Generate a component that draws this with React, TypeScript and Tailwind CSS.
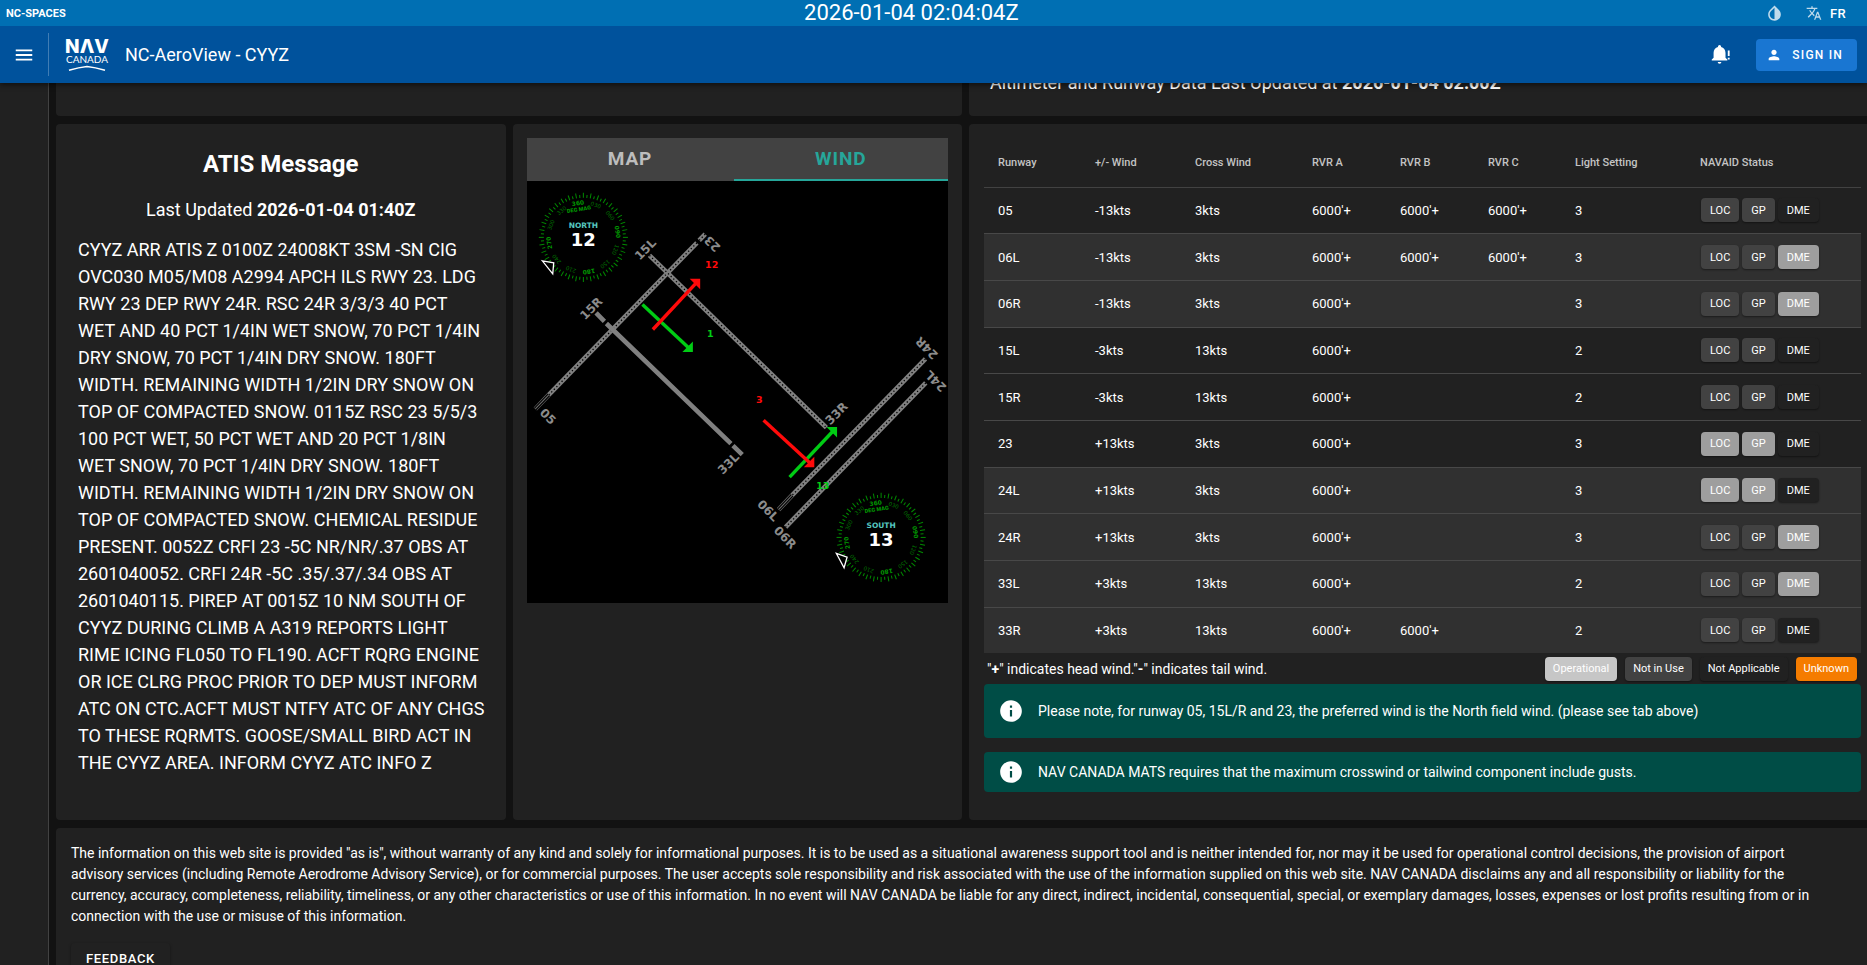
import React from "react";
import { MdInvertColors, MdTranslate, MdPerson, MdMenu, MdInfo } from "react-icons/md";

type Status = "off" | "on" | "na";

interface Runway {
  name: string;
  wind: string;
  cross: string;
  rvr: string[];
  light: string;
  shaded: boolean;
  loc: Status;
  gp: Status;
  dme: Status;
}

const V = "6000'+";

const runways: Runway[] = [
  { name: "05", wind: "-13kts", cross: "3kts", rvr: [V, V, V], light: "3", shaded: false, loc: "off", gp: "off", dme: "na" },
  { name: "06L", wind: "-13kts", cross: "3kts", rvr: [V, V, V], light: "3", shaded: true, loc: "off", gp: "off", dme: "on" },
  { name: "06R", wind: "-13kts", cross: "3kts", rvr: [V, "", ""], light: "3", shaded: true, loc: "off", gp: "off", dme: "on" },
  { name: "15L", wind: "-3kts", cross: "13kts", rvr: [V, "", ""], light: "2", shaded: false, loc: "off", gp: "off", dme: "na" },
  { name: "15R", wind: "-3kts", cross: "13kts", rvr: [V, "", ""], light: "2", shaded: false, loc: "off", gp: "off", dme: "na" },
  { name: "23", wind: "+13kts", cross: "3kts", rvr: [V, "", ""], light: "3", shaded: false, loc: "on", gp: "on", dme: "na" },
  { name: "24L", wind: "+13kts", cross: "3kts", rvr: [V, "", ""], light: "3", shaded: true, loc: "on", gp: "on", dme: "na" },
  { name: "24R", wind: "+13kts", cross: "3kts", rvr: [V, "", ""], light: "3", shaded: true, loc: "off", gp: "off", dme: "on" },
  { name: "33L", wind: "+3kts", cross: "13kts", rvr: [V, "", ""], light: "2", shaded: true, loc: "off", gp: "off", dme: "on" },
  { name: "33R", wind: "+3kts", cross: "13kts", rvr: [V, V, ""], light: "2", shaded: true, loc: "off", gp: "off", dme: "na" },
];

const columns = [
  { label: "Runway", width: "w-[97px]" },
  { label: "+/- Wind", width: "w-[100px]" },
  { label: "Cross Wind", width: "w-[117px]" },
  { label: "RVR A", width: "w-[88px]" },
  { label: "RVR B", width: "w-[88px]" },
  { label: "RVR C", width: "w-[87px]" },
  { label: "Light Setting", width: "w-[125px]" },
  { label: "NAVAID Status", width: "" },
];

const chipColor: Record<Status, string> = {
  off: "px-[9px] bg-[#424242]",
  on: "px-[9px] bg-[#9e9e9e]",
  na: "px-[9px] bg-[#212121]",
};

function Chip({ tone, children }: { tone: string; children: React.ReactNode }) {
  return (
    <span className={`inline-flex h-6 items-center rounded text-[11px] leading-none shadow-[0_1px_2px_rgba(0,0,0,0.45)] ${tone}`}>
      {children}
    </span>
  );
}

function Logo() {
  return (
    <svg viewBox="0 0 44 34" className="h-[34px] w-11 overflow-visible" role="img" aria-label="NAV CANADA" fill="#fff">
      <text x="22" y="15" textAnchor="middle" fontFamily="Inter, sans-serif" fontWeight="800" fontSize="19">NΛV</text>
      <text x="22" y="25" textAnchor="middle" fontFamily="Lato, sans-serif" fontWeight="400" fontSize="10">CANADA</text>
      <path d="M4 32.300 Q14 29.200 22 28.400 Q30 29.200 40 32.300" fill="none" stroke="#fff" strokeWidth="1.500" />
    </svg>
  );
}

function BellAlert() {
  return (
    <svg viewBox="0 0 24 24" className="size-[22px]" fill="#fff" aria-hidden="true">
      <path d="M20 17v1H3v-1l2-2V9.5C5 6.4 6.9 4 9.8 3.200V2.800a1.700 1.700 0 0 1 3.400 0v.4C16.100 4 18 6.400 18 9.500V15zM9.500 19.500h4a2 2 0 0 1-4 0zM20.500 7h2v6h-2zm0 8h2v2h-2z" />
    </svg>
  );
}

function Compass({ cx, cy, name, speed, pointer }: { cx: number; cy: number; name: string; speed: string; pointer: string }) {
  const ticks = Array.from({ length: 72 }, (_, i) => i * 5);
  const marks = ["360", "030", "060", "090", "120", "150", "180", "210", "240", "270", "300", "330"];
  return (
    <g transform={`translate(${cx} ${cy})`} fontFamily="DejaVu Sans, sans-serif" textAnchor="middle">
      {ticks.map((a) => (
        <line key={a} y1={a % 10 === 0 ? -44.5 : -42.5} y2={-39.5} stroke="#008a00" strokeWidth="1" transform={`rotate(${a})`} />
      ))}
      {marks.map((m, i) => (
        <text
          key={m}
          y="-32.500"
          fontSize={i % 3 === 0 ? 6 : 5.5}
          fill={i % 3 === 0 ? "#009600" : "#007000"}
          fontWeight={i % 3 === 0 ? 700 : 400}
          transform={`rotate(${i * 30 - 9})`}
        >
          {m}
        </text>
      ))}
      <text y="-26.500" fontSize="5.500" fontFamily="Roboto, sans-serif" fontWeight="900" fill="#009600" transform="rotate(-9)">DEG MAG</text>
      <text y="-9.500" fontSize="7.500" fontWeight="700" fill="#56c8c0">{name}</text>
      <text y="8.500" fontSize="18" fontWeight="700" fill="#fff">{speed}</text>
      <path d={pointer} fill="#000" stroke="#fff" strokeWidth="1.300" />
    </g>
  );
}

function DottedStrip({ d }: { d: string }) {
  return (
    <>
      <path d={d} stroke="#808080" strokeWidth="4.600" />
      <path d={d} stroke="#000" strokeWidth="1.300" strokeDasharray="1.300 2.400" />
    </>
  );
}

function Overrun({ d }: { d: string }) {
  return (
    <>
      <path d={d} stroke="#707070" strokeWidth="4.600" />
      <path d={d} stroke="#000" strokeWidth="3.400" />
      <path d={d} stroke="#707070" strokeWidth="1" />
    </>
  );
}

function WindArrow({ from, to, color }: { from: [number, number]; to: [number, number]; color: string }) {
  const dy = to[1] > from[1] ? -1 : 1;
  const [x, y] = to;
  return (
    <>
      <path d={`M${from[0]} ${from[1]}L${x - 3} ${y + 3 * dy}`} stroke={color} strokeWidth="3.400" />
      <path d={`M${x} ${y}h-10.500L${x} ${y + 10.5 * dy}z`} fill={color} />
    </>
  );
}

const runwayLabels: [string, number, number, number][] = [
  ["15L", 118, 68, -45],
  ["15R", 64, 127, -45],
  ["33L", 201, 282, -45],
  ["33R", 309, 232, -45],
  ["05", 21, 235, 45],
  ["06L", 241, 329, 45],
  ["06R", 258, 356, 45],
  ["23", 185, 63, 225],
  ["24R", 399, 167, 225],
  ["24L", 408, 200, 225],
];

function WindMap() {
  return (
    <svg viewBox="0 0 421 421" className="block w-full bg-black" role="img" aria-label="Wind diagram">
      <g fill="none">
        <DottedStrip d="M178 53 172 59.300" />
        <DottedStrip d="M169.700 61.700 21.700 213.700" />
        <Overrun d="M21.700 213.700 8.300 227.700" />
        <DottedStrip d="M122.300 74.300 299 246.300" />
        <path d="M69 131.700 77.300 140.300M79.300 142.300 203.700 262.300M205.700 264.300 215 273.300" stroke="#808080" strokeWidth="4.600" />
        <DottedStrip d="M398 177.700 264.700 314" />
        <Overrun d="M264.700 314 251.300 328.300" />
        <DottedStrip d="M398.300 201.700 258.300 345.700" />
      </g>
      <g fontFamily="DejaVu Sans, sans-serif" fontWeight="700" fontSize="12" fill="#8c8c8c" textAnchor="middle">
        {runwayLabels.map(([label, x, y, angle]) => (
          <text key={label} y="4.400" transform={`translate(${x} ${y}) rotate(${angle})`}>{label}</text>
        ))}
      </g>
      <WindArrow from={[115.3, 123.3]} to={[165.7, 170.7]} color="#00cc14" />
      <WindArrow from={[125.7, 148.3]} to={[173, 97.7]} color="#ff0a0a" />
      <WindArrow from={[262.3, 295.7]} to={[309.7, 245.7]} color="#00cc14" />
      <WindArrow from={[236.3, 239]} to={[287, 286]} color="#ff0a0a" />
      <g fontFamily="DejaVu Sans, sans-serif" fontWeight="700" fontSize="9.500" textAnchor="middle">
        <text x="184.500" y="87" fill="#ff0a0a">12</text>
        <text x="183" y="156" fill="#00cc14">1</text>
        <text x="232" y="222" fill="#ff0a0a">3</text>
        <text x="295.500" y="308" fill="#00cc14">13</text>
      </g>
      <Compass cx={56.3} cy={56.3} name="NORTH" speed="12" pointer="M-41 23.400 -29.600 25.400 -30.600 36.400z" />
      <Compass cx={353.7} cy={356} name="SOUTH" speed="13" pointer="M-44.700 16 -34 19.700 -37 30.300z" />
    </svg>
  );
}

function Notice({ className, children }: { className: string; children: React.ReactNode }) {
  return (
    <div className={`flex items-center gap-4 rounded bg-[#004d46] px-4 ${className}`} role="note">
      <MdInfo className="size-[26px] -mx-0.5 shrink-0" />
      <p className="text-sm">{children}</p>
    </div>
  );
}

export default function App() {
  return (
    <div className="flex h-screen flex-col overflow-hidden bg-[#121212] font-[Roboto,sans-serif] text-white">
      <div className="relative z-10 shrink-0 shadow-[0_2px_5px_rgba(0,0,0,0.5)]">
        <div className="flex h-[26px] items-center justify-between bg-[#006fb3] pl-[6px] pr-[21px]">
          <a href="#spaces" className="text-[11px] font-bold leading-none">NC-SPACES</a>
          <time className="text-[22px] leading-none">2026-01-04 02:04:04Z</time>
          <div className="flex items-center pl-2">
            <button type="button" aria-label="Toggle theme" className="mr-[22px]">
              <MdInvertColors className="size-[19px] text-white/75" />
            </button>
            <button type="button" className="flex items-center gap-2 text-[13px] font-medium leading-none tracking-wide">
              <MdTranslate className="size-4 text-white/75" />
              FR
            </button>
          </div>
        </div>
        <header className="flex h-[57px] items-center bg-[#00529c] pr-[10px]">
          <button type="button" aria-label="Menu" className="flex w-12 justify-center">
            <MdMenu className="size-[22px]" />
          </button>
          <div className="mr-4 h-[43px] w-px bg-white/25" />
          <Logo />
          <h1 className="ml-4 text-[18px] leading-none">NC-AeroView - CYYZ</h1>
          <button type="button" aria-label="Notifications" className="ml-auto mr-[25px]">
            <BellAlert />
          </button>
          <button type="button" className="flex h-8 items-center gap-[10px] rounded bg-[#1976d2] pl-[10px] pr-[14px] text-xs font-medium tracking-widest">
            <MdPerson className="size-4" />
            SIGN IN
          </button>
        </header>
      </div>

      <div className="flex grow">
        <nav aria-label="Main" className="w-[49px] shrink-0 border-r border-[#424242] bg-[#212121]" />

        <main className="-mr-2 -mt-[14px] flex grow flex-col gap-2 pl-[7px]">
          <div className="grid grid-cols-4 gap-[7px]">
            <section className="col-span-2 rounded bg-[#212121]" />
            <section className="col-span-2 rounded bg-[#212121] pb-5 pl-[21px]">
              <p className="text-[18px] leading-[27px]">
                Altimeter and Runway Data Last Updated at <b>2026-01-04 02:00Z</b>
              </p>
            </section>
          </div>

          <div className="grid grid-cols-4 gap-[7px]">
            <section className="rounded bg-[#212121] pb-4 pt-[26px]">
              <h2 className="text-center text-2xl font-bold leading-7">ATIS Message</h2>
              <p className="mt-[18px] text-center text-[18px] leading-[27px]">
                Last Updated <b>2026-01-04 01:40Z</b>
              </p>
              <p className="mt-[13px] pl-[22px] pr-[19px] text-[18px] leading-[27px]">
                CYYZ ARR ATIS Z 0100Z 24008KT 3SM -SN CIG OVC030 M05/M08 A2994 APCH ILS RWY 23. LDG RWY 23 DEP RWY 24R. RSC 24R
                3/3/3 40 PCT WET AND 40 PCT 1/4IN WET SNOW, 70 PCT 1/4IN DRY SNOW, 70 PCT 1/4IN DRY SNOW. 180FT WIDTH. REMAINING
                WIDTH 1/2IN DRY SNOW ON TOP OF COMPACTED SNOW. 0115Z RSC 23 5/5/3 100 PCT WET, 50 PCT WET AND 20 PCT 1/8IN{" "}
                <span className="whitespace-nowrap">WET SNOW,</span> 70 PCT 1/4IN DRY SNOW. 180FT WIDTH. REMAINING WIDTH 1/2IN DRY
                SNOW ON TOP OF COMPACTED SNOW. CHEMICAL RESIDUE PRESENT. 0052Z CRFI 23 -5C NR/NR/.37 OBS AT 2601040052. CRFI 24R
                -5C .35/.37/.34 OBS AT 2601040115. PIREP AT 0015Z 10 NM SOUTH OF CYYZ DURING CLIMB A A319 REPORTS LIGHT RIME ICING
                FL050 TO FL190. ACFT RQRG ENGINE OR ICE CLRG PROC PRIOR TO DEP MUST INFORM ATC ON CTC.ACFT MUST NTFY ATC OF ANY
                CHGS TO THESE RQRMTS. GOOSE/SMALL BIRD ACT IN THE CYYZ AREA. INFORM CYYZ ATC INFO Z
              </p>
            </section>

            <section className="rounded bg-[#212121] p-[14px]">
              <div role="tablist" className="flex h-[43px] bg-[#424242] text-[19px] font-bold tracking-wider">
                <button type="button" role="tab" aria-selected="false" className="w-[207px] text-[#bdbdbd]">MAP</button>
                <button type="button" role="tab" aria-selected="true" className="grow text-[#26a69a] shadow-[inset_0_-2px_0_#26a69a]">WIND</button>
              </div>
              <WindMap />
            </section>

            <section className="col-span-2 rounded bg-[#212121] pb-7 pl-[15px] pr-[14px] pt-[14px]">
              <table className="h-[515px] w-full table-fixed border-collapse text-left">
                <thead>
                  <tr className="h-[49px] border-b border-[#424242]">
                    {columns.map((c) => (
                      <th key={c.label} scope="col" className={`${c.width} px-[14px] pb-0 pt-0.5 text-[11px] font-medium text-[#c4c4c4]`}>
                        {c.label}
                      </th>
                    ))}
                  </tr>
                </thead>
                <tbody>
                  {runways.map((r, i) => (
                    <tr
                      key={r.name}
                      className={`${r.shaded ? "bg-[#303030]" : ""} ${i < runways.length - 1 ? "border-b border-[#484848]" : ""} text-[13px] leading-none`}
                    >
                      <td className="px-[14px] py-0">{r.name}</td>
                      <td className="px-[14px] py-0">{r.wind}</td>
                      <td className="px-[14px] py-0">{r.cross}</td>
                      {r.rvr.map((v, k) => (
                        <td key={k} className="px-[14px] py-0">{v}</td>
                      ))}
                      <td className="px-[14px] py-0">{r.light}</td>
                      <td className="py-0 pl-[15px]">
                        <div className="flex gap-[3px]">
                          <Chip tone={chipColor[r.loc]}>LOC</Chip>
                          <Chip tone={chipColor[r.gp]}>GP</Chip>
                          <Chip tone={chipColor[r.dme]}>DME</Chip>
                        </div>
                      </td>
                    </tr>
                  ))}
                </tbody>
              </table>
              <div className="flex h-[31px] items-center justify-between pl-[3px] pr-1">
                <p className="text-sm">
                  "<b>+</b>" indicates head wind."<b>-</b>" indicates tail wind.
                </p>
                <div className="flex gap-2">
                  <Chip tone="px-2 bg-[#c6c6c6]">Operational</Chip>
                  <Chip tone="px-2 bg-[#424242]">Not in Use</Chip>
                  <Chip tone="px-2 bg-[#212121]">Not Applicable</Chip>
                  <Chip tone="px-2 bg-[#f57c00]">Unknown</Chip>
                </div>
              </div>
              <Notice className="h-[54px]">
                Please note, for runway 05, 15L/R and 23, the preferred wind is the North field wind. (please see tab above)
              </Notice>
              <Notice className="mt-[14px] h-10">
                NAV CANADA MATS requires that the maximum crosswind or tailwind component include gusts.
              </Notice>
            </section>
          </div>

          <footer className="grow rounded-t bg-[#212121] pl-[15px] pr-[58px] pt-[15px]">
            <p className="text-sm leading-[21px]">
              The information on this web site is provided "as is", without warranty of any kind and solely for informational
              purposes. It is to be used as a situational awareness support tool and is neither intended for, nor may it be used
              for operational control decisions, the provision of airport advisory services (including Remote Aerodrome Advisory
              Service), or for commercial purposes. The user accepts sole responsibility and risk associated with the use of the
              information supplied on this web site. NAV CANADA disclaims any and all responsibility or liability for the
              currency, accuracy, completeness, reliability, timeliness, or any other characteristics or use of this information.
              In no event will NAV CANADA be liable for any direct, indirect, incidental, consequential, special, or exemplary
              damages, losses, expenses or lost profits resulting from or in connection with the use or misuse of this
              information.
            </p>
            <button type="button" className="mt-4 h-8 rounded px-[15px] text-[13px] font-medium tracking-wider shadow-[0_1px_3px_rgba(0,0,0,0.4)]">
              FEEDBACK
            </button>
          </footer>
        </main>
      </div>
    </div>
  );
}
